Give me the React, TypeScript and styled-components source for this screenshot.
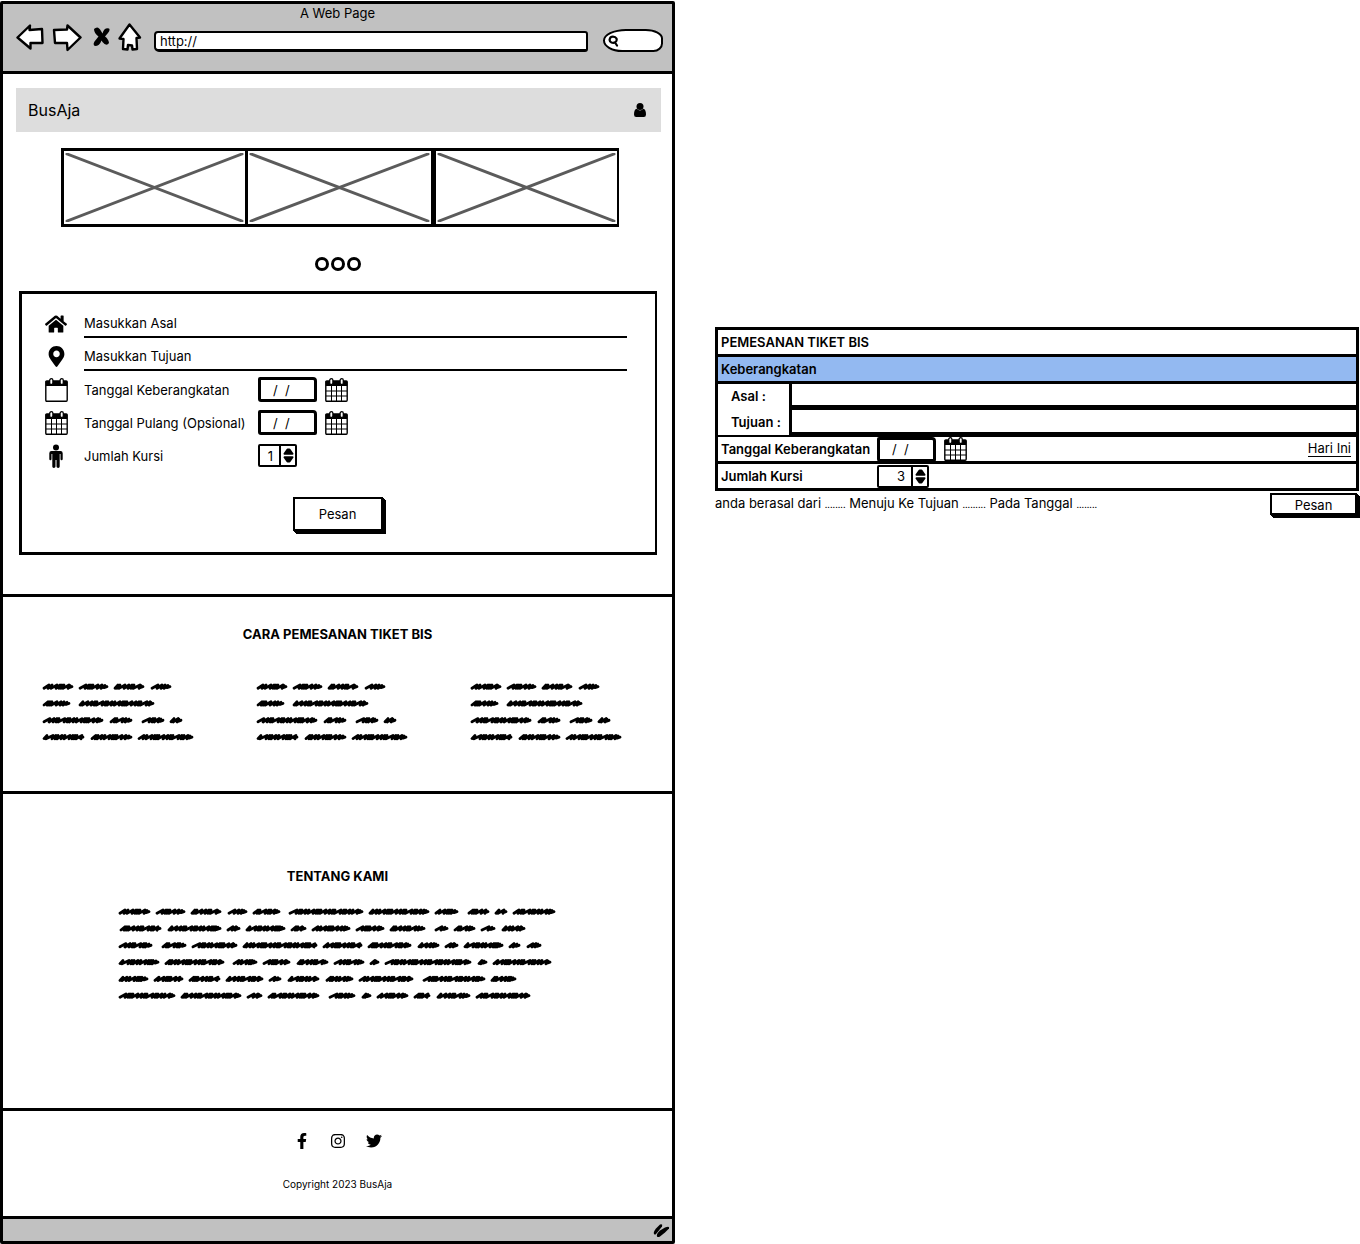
import React, { useState } from "react";
import styled, { createGlobalStyle } from "styled-components";
import {
  FaFacebookF,
  FaHome,
  FaInstagram,
  FaMapMarkerAlt,
  FaTwitter,
} from "react-icons/fa";

const INK = "#000";
const CHROME = "#c1c1c1";

const GlobalStyle = createGlobalStyle`
  *, *::before, *::after { box-sizing: border-box; }
  body { margin: 0; background: #fff; color: ${INK}; }
  body, button, input {
    font-family: Inter, "Liberation Sans", sans-serif;
    font-size: 13px;
    line-height: 20px;
  }
  button, input { color: ${INK}; }
  h1, h2, p { margin: 0; }
`;

const Board = styled.div`
  display: grid;
  grid-template-columns: minmax(0, 675fr) minmax(0, 644fr);
  column-gap: 40px;
  align-items: start;
  padding: 1px 1px 0 0;
`;

/* ---------- browser frame ---------- */

const Browser = styled.main`
  border: 3px solid ${INK};
  border-radius: 2px;
`;

const Chrome = styled.header`
  height: 70px;
  background: ${CHROME};
  border-bottom: 3px solid ${INK};
`;

const WindowTitle = styled.p`
  height: 18px;
  line-height: 18px;
  text-align: center;
`;

const Toolbar = styled.div`
  display: flex;
  align-items: flex-end;
  height: 30px;
  padding: 0 9px 0 13px;
`;

const ToolButton = styled.button<{ $gap: number }>`
  display: block;
  margin: 0 ${(p) => p.$gap}px 0 0;
  padding: 0;
  border: 0;
  background: none;
  svg { display: block; }
`;

const Address = styled.input`
  flex: 1;
  min-width: 0;
  height: 21px;
  padding: 0 4px;
  border: 2px solid ${INK};
  border-bottom-width: 3px;
  border-radius: 4px 3px 3px 5px;
  background: #fff;
`;

const SearchPill = styled.label`
  display: flex;
  align-items: center;
  width: 60px;
  height: 23px;
  margin-left: 15px;
  padding-left: 3px;
  border: 2px solid ${INK};
  border-radius: 24px 18px 10px 20px / 12px 10px 9px 12px;
  background: #fff;
`;

const SearchInput = styled.input`
  width: 36px;
  padding: 0;
  border: 0;
  background: none;
  outline: none;
`;

const StatusBar = styled.div`
  display: flex;
  align-items: center;
  justify-content: flex-end;
  height: 25px;
  padding-right: 2px;
  background: ${CHROME};
  border-top: 3px solid ${INK};
`;

/* ---------- page inside the frame ---------- */

const NavBar = styled.nav`
  display: flex;
  align-items: center;
  justify-content: space-between;
  height: 44px;
  margin: 14px 11px 0 13px;
  padding: 0 15px 0 12px;
  background: #ddd;
`;

const Brand = styled.h1`
  font-size: 16px;
  font-weight: 400;
`;

const Gallery = styled.div`
  display: grid;
  grid-template-columns: repeat(3, 1fr);
  margin: 16px 53px 0 58px;
`;

const Slide = styled.div`
  height: 79px;
  padding: 2px 1px;
  border: 3px solid ${INK};
  border-width: 3px 2px 3px 3px;
  &:nth-child(2) { border-left-width: 1px; }
  svg { display: block; width: 100%; height: 100%; }
`;

const Dots = styled.div`
  display: flex;
  justify-content: center;
  gap: 2px;
  margin-top: 30px;
`;

const Dot = styled.button`
  width: 14px;
  height: 14px;
  padding: 0;
  border: 3px solid ${INK};
  border-radius: 50%;
  background: #fff;
`;

const BookingForm = styled.form`
  margin: 20px 15px 39px 16px;
  padding: 13px 28px 21px 22px;
  border: 3px solid ${INK};
  border-width: 3px 2px 3px 3px;
`;

const FormRow = styled.div`
  display: grid;
  grid-template-columns: 24px minmax(0, 1fr);
  column-gap: 16px;
  align-items: center;
  height: 33px;
`;

const IconCell = styled.span`
  display: flex;
  justify-content: center;
`;

const LineInput = styled.input`
  align-self: start;
  width: 100%;
  height: 31px;
  padding: 3px 0 0;
  border: 0;
  border-bottom: 2px solid ${INK};
  background: none;
  outline: none;
  &::placeholder { color: ${INK}; opacity: 1; }
`;

const Labelled = styled.div`
  display: flex;
  align-items: center;
`;

const FieldLabel = styled.label<{ $width: number; $strong?: boolean }>`
  width: ${(p) => p.$width}px;
  font-weight: ${(p) => (p.$strong ? 600 : 400)};
  white-space: nowrap;
`;

const DateInput = styled.input`
  width: 59px;
  height: 25px;
  margin-right: 8px;
  padding: 0 0 0 12px;
  border: 3px solid ${INK};
  border-radius: 2px 4px 2px 3px;
  background: #fff;
  white-space: pre;
`;

const IconButton = styled.button`
  padding: 0;
  border: 0;
  background: none;
  svg { display: block; }
`;

const Stepper = styled.div<{ $width: number }>`
  display: flex;
  width: ${(p) => p.$width}px;
  height: 23px;
  border: 2px solid ${INK};
  border-radius: 2px;
  background: #fff;
`;

const StepValue = styled.input`
  flex: 1;
  min-width: 0;
  padding: 0 6px 0 0;
  border: 0;
  background: none;
  text-align: right;
`;

const StepButtons = styled.div`
  display: flex;
  flex-direction: column;
  justify-content: center;
  gap: 1px;
  width: 16px;
  padding: 0 2px;
  border-left: 2px solid ${INK};
`;

const StepButton = styled.button`
  height: 7px;
  padding: 0;
  border: 0;
  background: none;
  svg { display: block; margin: 0 auto; }
`;

const PushButton = styled.button<{ $width: number; $height: number }>`
  flex: none;
  display: block;
  width: ${(p) => p.$width}px;
  height: ${(p) => p.$height}px;
  padding: 0;
  border: 2px solid ${INK};
  background: #fff;
  box-shadow: 1px 1px 0 ${INK}, 2px 2px 0 ${INK}, 3px 3px 0 ${INK};
`;

const FormActions = styled.div`
  display: flex;
  justify-content: center;
  padding: 25px 0 0 4px;
`;

const Section = styled.section<{ $top: number; $bottom: number }>`
  padding: ${(p) => p.$top}px 0 ${(p) => p.$bottom}px;
  border-top: 3px solid ${INK};
`;

const SectionTitle = styled.h2`
  font-size: 13px;
  font-weight: 700;
  line-height: 20px;
  text-align: center;
`;

const StepColumns = styled.div`
  display: flex;
  justify-content: space-between;
  margin-top: 34px;
  padding: 0 49px 0 39px;
  svg { display: block; }
`;

const AboutCopy = styled.div`
  display: flex;
  justify-content: center;
  margin-top: 17px;
`;

const Footer = styled.footer`
  height: 108px;
  padding-top: 22px;
  border-top: 3px solid ${INK};
  text-align: center;
`;

const Socials = styled.div`
  display: flex;
  justify-content: center;
  gap: 20px;
`;

const SocialLink = styled.a`
  display: flex;
  justify-content: center;
  width: 16px;
  color: ${INK};
`;

const Copyright = styled.p`
  margin-top: 25px;
  font-size: 10px;
`;

/* ---------- ticket panel ---------- */

const TicketPanel = styled.form`
  margin-top: 326px;
`;

const TicketBox = styled.div`
  border: 3px solid ${INK};
`;

const TicketRow = styled.div<{ $tint?: boolean; $last?: boolean }>`
  display: flex;
  align-items: center;
  height: ${(p) => (p.$last ? 24 : 27)}px;
  padding: 0 5px 0 3px;
  border-bottom: ${(p) => (p.$last ? 0 : 3)}px solid ${INK};
  background: ${(p) => (p.$tint ? "#93b9f1" : "#fff")};
  font-size: 13px;
  font-weight: 600;
`;

const PlaceRow = styled.div`
  display: flex;
  align-items: center;
  height: 27px;
  padding-left: 13px;
`;

const PlaceInput = styled.input`
  flex: 1;
  min-width: 0;
  height: 27px;
  padding: 0 6px;
  border: 3px solid ${INK};
  border-right-width: 0;
  border-top-width: 2px;
  background: #fff;
`;

const PlaceRows = styled.div`
  border-bottom: 2px solid ${INK};
  ${PlaceRow}:first-child { height: 24px; }
  ${PlaceRow}:first-child ${PlaceInput} { height: 24px; border-top-width: 0; }
`;

const TodayLink = styled.a`
  margin-left: auto;
  line-height: 15px;
  border-bottom: 1px solid ${INK};
  color: ${INK};
  font-weight: 400;
  text-decoration: none;
`;

const TicketFooter = styled.div`
  display: flex;
  align-items: center;
  justify-content: space-between;
  padding: 2px 2px 0 0;
`;

const Blank = styled.span`
  font-size: 9px;
`;

/* ---------- drawings ---------- */

const outline = {
  fill: "#fff",
  stroke: INK,
  strokeWidth: 2.4,
  strokeLinejoin: "round" as const,
  strokeLinecap: "round" as const,
};

const BackIcon = () => (
  <svg width="28" height="30" viewBox="0 0 28 30" {...outline}>
    <path d="M1.5 15.500 14 3.500 13.500 8 26 7 26.500 21 14.500 21 14.500 26.500Z" />
  </svg>
);

const ForwardIcon = () => (
  <svg width="30" height="30" viewBox="0 0 30 30" {...outline}>
    <path d="M2 8 15 7.500 15.500 3.500 28.500 15.500 15.500 28 15 21 3 21Z" />
  </svg>
);

const StopIcon = () => (
  <svg width="17" height="30" viewBox="0 0 17 30" fill={INK}>
    <path d="M1 7Q5 3 8 9L9.500 11.500Q11 5.500 16 6.500 17.500 8 15 11L12 14.500Q15.500 17 16 21 13.500 25 9.500 20L8.500 18.500Q6.500 24 2 24 -.5 23 1.500 19.500L5.500 14.500Q1 11 1 7Z" />
  </svg>
);

const HomeArrowIcon = () => (
  <svg width="24" height="30" viewBox="0 0 24 30" {...outline}>
    <path d="M11.500 2.500 22 15.500 18.500 16 19 27 14.500 27.500 14 23.500 10 23 9.500 27.500 5 27 5.500 17 1.500 16.500Z" />
  </svg>
);

const SearchIcon = () => (
  <svg width="11" height="12" viewBox="0 0 11 12" fill="none" stroke={INK} strokeWidth="2.200" strokeLinecap="round">
    <path d="M2 3.500C2.500 1 7 .8 8.500 3.500 9.500 7 6 8.500 3.500 7.500 1.500 6.500 1.300 5 2 3.500ZM7 7.500 9 10.500" />
  </svg>
);

const GripIcon = () => (
  <svg width="17" height="15" viewBox="0 0 17 15" fill={INK}>
    <path d="M1 11Q0 9 3 5.500L7 1.500Q10 .5 9 3.500L5.500 8 3 11Q2 12 1 11Z" />
    <path d="M4 13.500Q3 11 7 7.500L12 4.500Q17 2.500 16 5.500L12 9.500 7 13.500Q5 14.500 4 13.500Z" />
  </svg>
);

const UserIcon = () => (
  <svg width="12" height="14" viewBox="0 0 12 14" fill={INK}>
    <circle cx="6" cy="3.500" r="3.500" />
    <path d="M2.700 5.800Q6 9 9.300 5.800 12 6.300 12 11.500 12 14 9.800 14H2.200Q0 14 0 11.500 0 6.300 2.700 5.800Z" />
  </svg>
);

const PersonIcon = () => (
  <svg width="14" height="24" viewBox="0 0 14 24" fill={INK}>
    <circle cx="7" cy="3.400" r="3" />
    <path d="M2.500 7H11.500Q13.700 7 13.700 9.200V15Q13.700 16.200 12.600 16.200 11.500 16.200 11.500 15V10H10.700V22.500Q10.700 23.900 9.200 23.900 7.500 23.900 7.500 22.500V16H6.500V22.500Q6.500 23.900 4.800 23.900 3.300 23.900 3.300 22.500V10H2.500V15Q2.500 16.200 1.400 16.200 .3 16.200 .3 15V9.200Q.3 7 2.500 7Z" />
  </svg>
);

const Cross = () => (
  <svg viewBox="0 0 180 70" preserveAspectRatio="none" aria-hidden="true">
    <path d="M2 1 178 69M2 69 178 1" stroke="#5b5b5b" strokeWidth="3" strokeLinecap="round" />
  </svg>
);

const CalendarIcon = ({ grid }: { grid?: boolean }) => (
  <svg width="23" height="24" viewBox="0 0 23 24" aria-hidden="true">
    <path d="M.8 4Q.8 3 1.800 3H21.200Q22.200 3 22.200 4V22Q22.200 23.300 21.200 23.300H1.800Q.8 23.300 .8 22Z" fill="#fff" stroke={INK} strokeWidth="1.400" />
    <path d="M.8 3H22.200V8H.8Z" fill={INK} />
    <rect x="4.700" y=".7" width="3.200" height="5.800" rx="1.600" fill="#fff" stroke={INK} strokeWidth="1.300" />
    <rect x="15.100" y=".7" width="3.200" height="5.800" rx="1.600" fill="#fff" stroke={INK} strokeWidth="1.300" />
    {grid && <path d="M6.500 8V23M11.500 8V23M16.500 8V23M1 13H22M1 18H22" stroke={INK} strokeWidth="1" />}
  </svg>
);

const Caret = ({ down }: { down?: boolean }) => (
  <svg width="11" height="7" viewBox="0 0 11 7" aria-hidden="true">
    <path
      d={down ? "M1.500 1.200H9.500L6.500 5.500H4.500Z" : "M1.500 5.800H9.500L6.500 1.500H4.500Z"}
      fill={INK}
      stroke={INK}
      strokeWidth="2"
      strokeLinejoin="round"
    />
  </svg>
);

/* Each row of scribble is a list of [start, end] spans. */
type Span = [number, number];

const STEP_LINES: Span[][] = [
  [[0, 31], [36, 66], [71, 102], [108, 129]],
  [[0, 28], [36, 112]],
  [[0, 61], [67, 90], [99, 122], [127, 140]],
  [[0, 42], [48, 90], [95, 151]],
];

const ABOUT_LINES: Span[][] = [
  [[0, 32], [37, 67], [72, 103], [109, 129], [134, 162], [170, 245], [250, 311], [316, 340], [349, 371], [376, 389], [394, 437]],
  [[1, 43], [49, 103], [108, 122], [127, 167], [172, 188], [193, 232], [237, 266], [271, 307], [316, 330], [335, 357], [362, 377], [383, 407]],
  [[0, 34], [43, 68], [73, 119], [124, 199], [204, 244], [249, 293], [299, 321], [326, 340], [345, 385], [390, 402], [408, 423]],
  [[0, 41], [46, 106], [114, 139], [144, 172], [178, 210], [215, 246], [251, 261], [266, 353], [359, 369], [374, 433]],
  [[0, 30], [35, 65], [70, 102], [107, 145], [150, 163], [169, 201], [207, 235], [240, 295], [304, 367], [372, 398]],
  [[0, 57], [62, 123], [128, 144], [149, 201], [210, 237], [243, 253], [258, 290], [295, 312], [318, 352], [357, 412]],
];

const STRIDES = [5, 4, 6, 4, 3, 3, 6, 5, 4, 3, 7, 4, 3];

function scribble([from, to]: Span, y: number, seed: number): string {
  let x = from + 2;
  let i = seed;
  let d = `M${x} ${y + 1.5}`;
  while (x < to - 7) {
    const stride = STRIDES[i % STRIDES.length];
    d += `L${x + stride} ${y - 1.7}L${x + stride - 1} ${y + 1.7}`;
    x += stride - 1;
    i += 1;
  }
  return `${d}L${to - 3} ${y - 1.2}L${to - 4} ${y + 1}L${to - 1} ${y}`;
}

const Scribbles = ({ lines, width }: { lines: Span[][]; width: number }) => (
  <svg width={width} height={lines.length * 17} viewBox={`0 0 ${width} ${lines.length * 17}`} aria-hidden="true">
    <path
      d={lines.map((row, r) => row.map((s, i) => scribble(s, r * 16.8 + 8.7, r * 3 + i * 2)).join("")).join("")}
      fill="none"
      stroke={INK}
      strokeWidth="2.800"
      strokeLinecap="round"
      strokeLinejoin="round"
    />
  </svg>
);

/* ---------- controls ---------- */

const DateField = ({ id }: { id: string }) => (
  <>
    <DateInput id={id} defaultValue="/  /" />
    <IconButton type="button" aria-label="Kalender">
      <CalendarIcon grid />
    </IconButton>
  </>
);

const SeatStepper = ({ id, initial, width }: { id: string; initial: number; width: number }) => {
  const [seats, setSeats] = useState(initial);
  return (
    <Stepper $width={width}>
      <StepValue
        id={id}
        inputMode="numeric"
        value={seats}
        onChange={(e) => setSeats(Number(e.target.value) || 0)}
      />
      <StepButtons>
        <StepButton type="button" aria-label="Tambah" onClick={() => setSeats(seats + 1)}>
          <Caret />
        </StepButton>
        <StepButton type="button" aria-label="Kurang" onClick={() => setSeats(Math.max(0, seats - 1))}>
          <Caret down />
        </StepButton>
      </StepButtons>
    </Stepper>
  );
};

const stay = (e: React.FormEvent) => e.preventDefault();

export default function App() {
  return (
    <>
      <GlobalStyle />
      <Board>
        <Browser>
          <Chrome>
            <WindowTitle>A Web Page</WindowTitle>
            <Toolbar>
              <ToolButton $gap={8} aria-label="Back"><BackIcon /></ToolButton>
              <ToolButton $gap={11} aria-label="Forward"><ForwardIcon /></ToolButton>
              <ToolButton $gap={8} aria-label="Stop"><StopIcon /></ToolButton>
              <ToolButton $gap={12} aria-label="Home"><HomeArrowIcon /></ToolButton>
              <Address aria-label="Address" defaultValue="http://" />
              <SearchPill>
                <SearchIcon />
                <SearchInput aria-label="Search" />
              </SearchPill>
            </Toolbar>
          </Chrome>

          <NavBar>
            <Brand>BusAja</Brand>
            <IconButton aria-label="Akun"><UserIcon /></IconButton>
          </NavBar>

          <Gallery>
            <Slide><Cross /></Slide>
            <Slide><Cross /></Slide>
            <Slide><Cross /></Slide>
          </Gallery>
          <Dots>
            <Dot aria-label="Slide 1" />
            <Dot aria-label="Slide 2" />
            <Dot aria-label="Slide 3" />
          </Dots>

          <BookingForm onSubmit={stay}>
            <FormRow>
              <IconCell><FaHome size={22} /></IconCell>
              <LineInput aria-label="Asal" placeholder="Masukkan Asal" />
            </FormRow>
            <FormRow>
              <IconCell><FaMapMarkerAlt size={21} /></IconCell>
              <LineInput aria-label="Tujuan" placeholder="Masukkan Tujuan" />
            </FormRow>
            <FormRow>
              <IconCell><CalendarIcon /></IconCell>
              <Labelled>
                <FieldLabel $width={174} htmlFor="berangkat">Tanggal Keberangkatan</FieldLabel>
                <DateField id="berangkat" />
              </Labelled>
            </FormRow>
            <FormRow>
              <IconCell><CalendarIcon grid /></IconCell>
              <Labelled>
                <FieldLabel $width={174} htmlFor="pulang">Tanggal Pulang (Opsional)</FieldLabel>
                <DateField id="pulang" />
              </Labelled>
            </FormRow>
            <FormRow>
              <IconCell><PersonIcon /></IconCell>
              <Labelled>
                <FieldLabel $width={174} htmlFor="kursi">Jumlah Kursi</FieldLabel>
                <SeatStepper id="kursi" initial={1} width={39} />
              </Labelled>
            </FormRow>
            <FormActions>
              <PushButton $width={90} $height={34}>Pesan</PushButton>
            </FormActions>
          </BookingForm>

          <Section $top={27} $bottom={45}>
            <SectionTitle>CARA PEMESANAN TIKET BIS</SectionTitle>
            <StepColumns>
              <Scribbles lines={STEP_LINES} width={153} />
              <Scribbles lines={STEP_LINES} width={153} />
              <Scribbles lines={STEP_LINES} width={153} />
            </StepColumns>
          </Section>

          <Section $top={72} $bottom={103}>
            <SectionTitle>TENTANG KAMI</SectionTitle>
            <AboutCopy>
              <Scribbles lines={ABOUT_LINES} width={439} />
            </AboutCopy>
          </Section>

          <Footer>
            <Socials>
              <SocialLink href="#facebook" aria-label="Facebook"><FaFacebookF size={16} /></SocialLink>
              <SocialLink href="#instagram" aria-label="Instagram"><FaInstagram size={16} /></SocialLink>
              <SocialLink href="#twitter" aria-label="Twitter"><FaTwitter size={16} /></SocialLink>
            </Socials>
            <Copyright>Copyright 2023 BusAja</Copyright>
          </Footer>
          <StatusBar><GripIcon /></StatusBar>
        </Browser>

        <TicketPanel onSubmit={stay}>
          <TicketBox>
            <TicketRow as="h2">PEMESANAN TIKET BIS</TicketRow>
            <TicketRow $tint>Keberangkatan</TicketRow>
            <PlaceRows>
              <PlaceRow>
                <FieldLabel $width={58} $strong htmlFor="asal">Asal :</FieldLabel>
                <PlaceInput id="asal" />
              </PlaceRow>
              <PlaceRow>
                <FieldLabel $width={58} $strong htmlFor="tujuan">Tujuan :</FieldLabel>
                <PlaceInput id="tujuan" />
              </PlaceRow>
            </PlaceRows>
            <TicketRow>
              <FieldLabel $width={156} $strong htmlFor="tanggal">Tanggal Keberangkatan</FieldLabel>
              <DateField id="tanggal" />
              <TodayLink href="#hari-ini">Hari Ini</TodayLink>
            </TicketRow>
            <TicketRow $last>
              <FieldLabel $width={156} $strong htmlFor="jumlah">Jumlah Kursi</FieldLabel>
              <SeatStepper id="jumlah" initial={3} width={52} />
            </TicketRow>
          </TicketBox>
          <TicketFooter>
            <p>
              anda berasal dari <Blank>........</Blank> Menuju Ke Tujuan <Blank>.........</Blank> Pada
              Tanggal <Blank>........</Blank>
            </p>
            <PushButton $width={87} $height={22}>Pesan</PushButton>
          </TicketFooter>
        </TicketPanel>
      </Board>
    </>
  );
}
